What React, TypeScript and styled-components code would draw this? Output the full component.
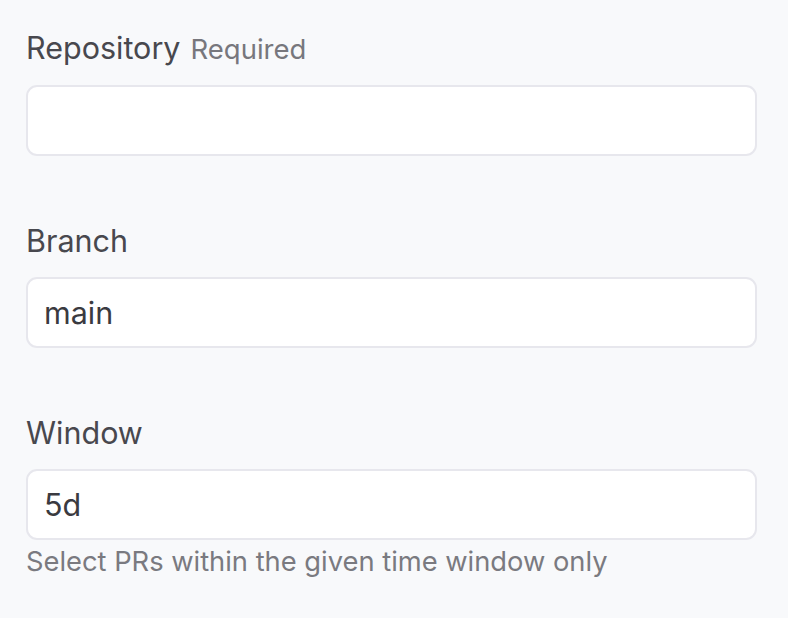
import React from 'react';
import styled, { createGlobalStyle } from 'styled-components';

const GlobalStyle = createGlobalStyle`
  html, body {
    margin: 0;
    padding: 0;
    background: #f8f9fb;
    font-family: Inter, "Open Sans", "Liberation Sans", sans-serif;
  }
`;

const fields = [
  { label: 'Repository', required: true, value: '' },
  { label: 'Branch', value: 'main' },
  { label: 'Window', value: '5d', hint: 'Select PRs within the given time window only' },
];

export default function App() {
  return (
    <>
      <GlobalStyle />
      <Form>
        {fields.map(({ label, required, value, hint }) => (
          <Field key={label}>
            <Label>
              {label}
              {required && <Required>Required</Required>}
            </Label>
            <Input defaultValue={value} />
            {hint && <Hint>{hint}</Hint>}
          </Field>
        ))}
      </Form>
    </>
  );
}

const Form = styled.form`
  display: flex;
  flex-direction: column;
  gap: 65px;
  padding: 28px 31px 0 26px;
  width: 731px;
`;

const Field = styled.div`
  display: flex;
  flex-direction: column;
`;

const Label = styled.label`
  display: flex;
  align-items: baseline;
  gap: 10px;
  font-size: 30.5px;
  line-height: 40px;
  color: #48484e;
  margin-bottom: 16px;
`;

const Required = styled.span`
  font-size: 27.5px;
  color: #77777d;
`;

const Input = styled.input`
  box-sizing: border-box;
  width: 100%;
  height: 71px;
  padding: 0 16px;
  border: 2px solid #e7e7ed;
  border-radius: 11px;
  background: #fff;
  font-family: inherit;
  font-size: 30.5px;
  color: #3a3a40;
  outline: none;
`;

const Hint = styled.div`
  margin-top: 5px;
  font-size: 27.3px;
  line-height: 34px;
  color: #7a7a80;
`;
